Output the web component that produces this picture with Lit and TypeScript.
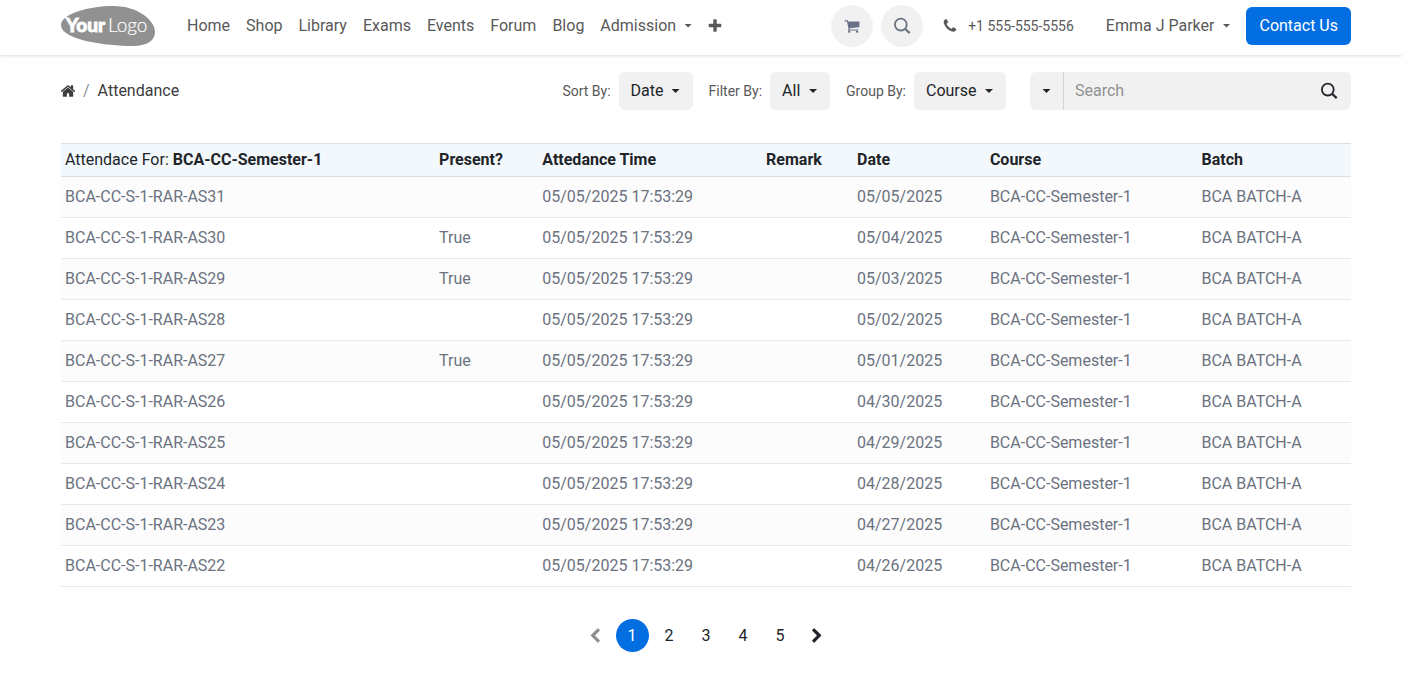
import { LitElement, html, css, svg } from "lit";
import { customElement } from "lit/decorators.js";

const icons = {
  home: "M1472 992v480q0 26-19 45t-45 19h-384v-384h-256v384h-384q-26 0-45-19t-19-45v-480q0-1 .5-3t.5-3l575-474 575 474q1 2 1 6zm223-69l-62 74q-8 9-21 11h-3q-13 0-21-7l-692-577-692 577q-12 8-24 7-13-2-21-11l-62-74q-8-10-7-23.5t11-21.5l719-599q32-26 76-26t76 26l244 204v-195q0-14 9-23t23-9h192q14 0 23 9t9 23v408l219 182q10 8 11 21.5t-7 23.5z",
  cart: "M704 1536q0 52-38 90t-90 38-90-38-38-90 38-90 90-38 90 38 38 90zm896 0q0 52-38 90t-90 38-90-38-38-90 38-90 90-38 90 38 38 90zm128-1088v512q0 24-16.5 42.5t-40.5 21.5l-1044 122q13 60 13 70 0 16-24 64h920q26 0 45 19t19 45-19 45-45 19h-1024q-26 0-45-19t-19-45q0-11 8-31.5t16-36 21.5-40 15.5-29.5l-177-823h-204q-26 0-45-19t-19-45 19-45 45-19h256q16 0 28.5 6.5t19.5 15.5 13 24.5 8 26 5.5 29.5 4.5 26h1201q26 0 45 19t19 45z",
  phone: "M1600 1240q0 27-10 70.5t-21 68.5q-21 50-122 106-94 51-186 51-27 0-53-3.5t-57.5-12.5-47-14.5-55.5-20.5-49-18q-98-35-175-83-127-79-264-216t-216-264q-48-77-83-175-3-9-18-49t-20.5-55.5-14.5-47-12.5-57.5-3.5-53q0-92 51-186 56-101 106-122 25-11 68.5-21t70.5-10q14 0 21 3 18 6 53 76 11 19 30 54t35 63.5 31 53.5q3 4 17.5 25t21.5 35.5 7 28.5q0 20-28.5 50t-62 55-62 53-28.5 46q0 9 5 22.5t8.5 20.5 14 24 11.5 19q76 137 174 235t235 174q2 1 19 11.5t24 14 20.5 8.5 22.5 5q18 0 46-28.5t53-62 55-62 50-28.5q14 0 28.5 7t35.5 21.5 25 17.5q25 15 53.5 31t63.5 35 54 30q70 35 76 53 3 7 3 21z",
  plus: "M1600 736v192q0 40-28 68t-68 28h-416v416q0 40-28 68t-68 28h-192q-40 0-68-28t-28-68v-416h-416q-40 0-68-28t-28-68v-192q0-40 28-68t68-28h416v-416q0-40 28-68t68-28h192q40 0 68 28t28 68v416h416q40 0 68 28t28 68z",
  previous: "M1427 301l-531 531 531 531q19 19 19 45t-19 45l-166 166q-19 19-45 19t-45-19l-742-742q-19-19-19-45t19-45l742-742q19-19 45-19t45 19l166 166q19 19 19 45t-19 45z",
};

const icon = (d: string, { tight = false, mirrored = false } = {}) => html`
  <svg width=${tight ? 14 : 16} height="16" viewBox=${tight ? "112 0 1568 1792" : "0 0 1792 1792"} fill="currentColor" aria-hidden="true">
    ${svg`<path d=${d} transform=${mirrored ? "matrix(-1 0 0 1 1792 0)" : "matrix(1 0 0 1 0 0)"}></path>`}
  </svg>`;

const searchIcon = html`
  <svg width="18" height="18" viewBox="0 0 18 18" fill="none" stroke="currentColor" stroke-width="1.8" aria-hidden="true">
    <circle cx="7.8" cy="7.6" r="5.9"></circle>
    <path d="M12 11.8l4.7 4.3" stroke-width="2.2"></path>
  </svg>`;

const navLinks = ["Home", "Shop", "Library", "Exams", "Events", "Forum", "Blog"];

const filters = [
  { id: "sort", label: "Sort By:", value: "Date" },
  { id: "filter", label: "Filter By:", value: "All" },
  { id: "group", label: "Group By:", value: "Course" },
];

const rows = [
  { name: "BCA-CC-S-1-RAR-AS31", present: "", date: "05/05/2025" },
  { name: "BCA-CC-S-1-RAR-AS30", present: "True", date: "05/04/2025" },
  { name: "BCA-CC-S-1-RAR-AS29", present: "True", date: "05/03/2025" },
  { name: "BCA-CC-S-1-RAR-AS28", present: "", date: "05/02/2025" },
  { name: "BCA-CC-S-1-RAR-AS27", present: "True", date: "05/01/2025" },
  { name: "BCA-CC-S-1-RAR-AS26", present: "", date: "04/30/2025" },
  { name: "BCA-CC-S-1-RAR-AS25", present: "", date: "04/29/2025" },
  { name: "BCA-CC-S-1-RAR-AS24", present: "", date: "04/28/2025" },
  { name: "BCA-CC-S-1-RAR-AS23", present: "", date: "04/27/2025" },
  { name: "BCA-CC-S-1-RAR-AS22", present: "", date: "04/26/2025" },
];

const shared = css`
  *, *::before, *::after { box-sizing: border-box; }
  a { color: inherit; text-decoration: none; }
  button, select, input { font: inherit; color: inherit; border: 0; margin: 0; padding: 0; background: none; }
  button { cursor: pointer; }
  svg { display: block; flex: none; }
  .caret { width: 8px; height: 4px; background: currentColor; clip-path: polygon(0 0, 100% 0, 50% 100%); flex: none; }
`;

@customElement("site-header")
export class SiteHeader extends LitElement {
  static styles = [shared, css`
    :host { display: block; color: #595959; box-shadow: 0 1px 3px rgba(0, 0, 0, 0.14); }
    .bar { display: flex; align-items: center; height: 55px; padding: 0 51px 4px 61px; }
    .nav { display: flex; align-items: center; gap: 16px; margin-left: 32px; white-space: nowrap; }
    .menu { display: flex; align-items: center; gap: 8px; white-space: nowrap; }
    .tools { display: flex; align-items: center; margin-left: auto; }
    .round { display: flex; align-items: center; justify-content: center; width: 42px; height: 42px; margin-right: 8px; border-radius: 50%; background: #f1f1f1; color: #6b7280; }
    .cart { color: #6b7089; }
    .phone { display: flex; align-items: center; gap: 11px; margin: 0 32px 0 12px; font-size: 14px; white-space: nowrap; }
    .contact { margin-left: 16px; padding: 7px 13px; border-radius: 6px; background: #026ee2; color: #fff; white-space: nowrap; }
    .logo-bold { font: 900 19px Lato, sans-serif; fill: #fff; stroke: #fff; stroke-width: 0.8; }
    .logo-thin { font: 300 19px Lato, sans-serif; fill: #fff; stroke: #fff; stroke-width: 0.2; }
  `];

  render() {
    return html`
      <header class="bar">
        <a href="#" aria-label="YourLogo">
          <svg width="94" height="40" viewBox="0 0 94 40">
            <path fill="#919191" d="M0 19C0 8 27 0 53 0C76 0 94 14 94 26C94 35 85 40 72 40C45 40 0 34 0 19Z"></path>
            <circle cx="5" cy="11" r="1" fill="#fff"></circle>
            <text class="logo-bold" x="5" y="26">Your</text>
            <text class="logo-thin" x="47" y="26">Logo</text>
          </svg>
        </a>
        <nav class="nav">
          ${navLinks.map((label) => html`<a href="#">${label}</a>`)}
          <button class="menu" type="button" aria-haspopup="true">Admission<span class="caret"></span></button>
          <button type="button" aria-label="More">${icon(icons.plus, { tight: true })}</button>
        </nav>
        <div class="tools">
          <a class="round cart" href="#" aria-label="Cart">${icon(icons.cart)}</a>
          <button class="round" type="button" aria-label="Search">${searchIcon}</button>
          <a class="phone" href="#">${icon(icons.phone, { tight: true })}+1 555-555-5556</a>
          <button class="menu" type="button" aria-haspopup="true">Emma J Parker<span class="caret"></span></button>
          <a class="contact" href="#">Contact Us</a>
        </div>
      </header>`;
  }
}

@customElement("attendance-toolbar")
export class AttendanceToolbar extends LitElement {
  static styles = [shared, css`
    :host { display: flex; align-items: center; justify-content: space-between; }
    .crumbs { display: flex; align-items: center; gap: 8px; color: #3c3c3c; }
    .slash { color: #8a8f95; }
    .controls { display: flex; align-items: center; gap: 16px; color: #212529; }
    .field { display: flex; align-items: center; gap: 8px; }
    .field-label { font-size: 14px; color: #595959; white-space: nowrap; }
    .picker { display: grid; align-items: center; }
    .picker select { grid-area: 1 / 1; height: 38px; padding: 0 29px 0 12px; border-radius: 6px; background: #f1f1f1; appearance: none; }
    .picker .caret { grid-area: 1 / 1; justify-self: end; margin-right: 13px; pointer-events: none; }
    .search { display: flex; align-items: center; width: 321px; height: 38px; margin-left: 8px; border-radius: 6px; background: #f1f1f1; }
    .scope { display: flex; align-items: center; justify-content: center; align-self: stretch; width: 34px; border-right: 1px solid #d2d2d2; }
    .query { flex: 1; min-width: 0; padding: 0 11px; outline: 0; }
    .query::placeholder { color: #909090; opacity: 1; }
    .go { padding: 0 13px; }
  `];

  render() {
    return html`
      <nav class="crumbs" aria-label="Breadcrumb">
        <a href="#" aria-label="Home">${icon(icons.home, { tight: true })}</a>
        <span class="slash">/</span>
        <span>Attendance</span>
      </nav>
      <div class="controls">
        ${filters.map((f) => html`
          <div class="field">
            <label class="field-label" for=${f.id}>${f.label}</label>
            <span class="picker">
              <select id=${f.id}><option>${f.value}</option></select>
              <span class="caret"></span>
            </span>
          </div>`)}
        <form class="search" role="search">
          <button class="scope" type="button" aria-label="Search in"><span class="caret"></span></button>
          <input class="query" type="text" placeholder="Search" aria-label="Search" />
          <button class="go" type="button" aria-label="Search">${searchIcon}</button>
        </form>
      </div>`;
  }
}

@customElement("attendance-table")
export class AttendanceTable extends LitElement {
  static styles = [shared, css`
    :host { display: block; }
    .table { width: 100%; border-collapse: collapse; table-layout: fixed; color: #6b7280; }
    .c-name { width: 29%; }
    .c-present { width: 8%; }
    .c-time { width: 17.35%; }
    .c-remark { width: 7.05%; }
    .c-date { width: 10.3%; }
    .c-course { width: 16.4%; }
    th { padding: 4px; text-align: left; font-weight: 700; color: #212529; background: #f3f8fc; border-top: 1px solid #dbe0e5; border-bottom: 1px solid #dbe0e5; }
    .for { font-weight: 400; }
    td { padding: 8px 4px; border-bottom: 1px solid #e6e8ea; }
    tbody tr:nth-child(odd) { background: #fcfcfc; }
  `];

  render() {
    return html`
      <table class="table">
        <colgroup>
          <col class="c-name" /><col class="c-present" /><col class="c-time" /><col class="c-remark" />
          <col class="c-date" /><col class="c-course" /><col />
        </colgroup>
        <thead>
          <tr>
            <th><span class="for">Attendace For:</span> BCA-CC-Semester-1</th>
            <th>Present?</th><th>Attedance Time</th><th>Remark</th><th>Date</th><th>Course</th><th>Batch</th>
          </tr>
        </thead>
        <tbody>
          ${rows.map((r) => html`
            <tr>
              <td>${r.name}</td><td>${r.present}</td><td>05/05/2025 17:53:29</td><td></td>
              <td>${r.date}</td><td>BCA-CC-Semester-1</td><td>BCA BATCH-A</td>
            </tr>`)}
        </tbody>
      </table>`;
  }
}

@customElement("page-links")
export class PageLinks extends LitElement {
  static styles = [shared, css`
    :host { display: block; }
    .pages { display: flex; justify-content: center; gap: 4px; color: #212529; }
    .page { display: flex; align-items: center; justify-content: center; width: 33px; height: 33px; border-radius: 50%; }
    .current { background: #026ee2; color: #fff; }
    .off { color: #909090; }
  `];

  render() {
    return html`
      <nav class="pages" aria-label="Pages">
        <a class="page off" aria-label="Previous">${icon(icons.previous)}</a>
        ${[1, 2, 3, 4, 5].map((n) => html`<a class="page ${n === 1 ? "current" : ""}" href="#">${n}</a>`)}
        <a class="page" href="#" aria-label="Next">${icon(icons.previous, { mirrored: true })}</a>
      </nav>`;
  }
}

@customElement("app-root")
export class AppRoot extends LitElement {
  static styles = css`
    :host { display: block; min-height: 100vh; background: #fff; font: 16px/24px Roboto, "Liberation Sans", sans-serif; }
    .content { padding: 17px 51px 31px 61px; }
    .records { margin: 33px 0 32px; }
  `;

  render() {
    return html`
      <site-header></site-header>
      <main class="content">
        <attendance-toolbar></attendance-toolbar>
        <attendance-table class="records"></attendance-table>
        <page-links></page-links>
      </main>`;
  }
}
